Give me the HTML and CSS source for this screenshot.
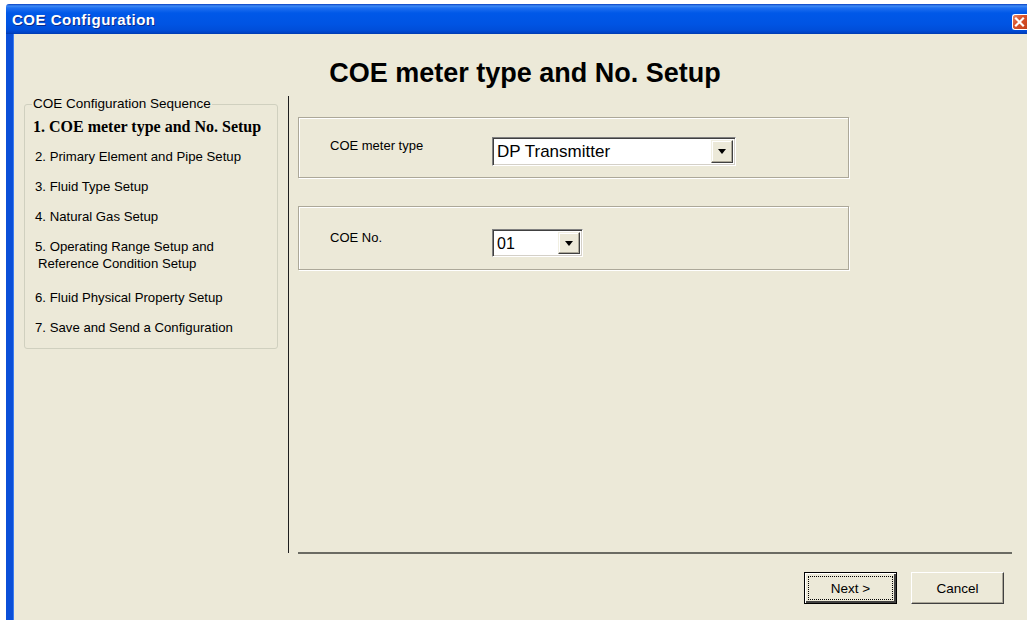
FILE: index.html
```html
<!DOCTYPE html>
<html>
<head>
<meta charset="utf-8">
<title>COE Configuration</title>
<link rel="stylesheet" href="styles.css">
</head>
<body>
<div class="window">
  <div class="titlebar">
    <span class="title">COE Configuration</span>
    <span class="close">
      <svg width="15" height="16" viewBox="0 0 15 16">
        <path d="M4 4.5 L11 11.5 M11 4.5 L4 11.5" stroke="#fff" stroke-width="2.2" stroke-linecap="square"/>
      </svg>
    </span>
  </div>
  <div class="client">
    <h1 class="heading">COE meter type and No. Setup</h1>
    <div class="work">
      <fieldset class="sequence">
        <legend>COE Configuration Sequence</legend>
        <ul class="steps">
          <li class="step current">1. COE meter type and No. Setup</li>
          <li class="step">2. Primary Element and Pipe Setup</li>
          <li class="step">3. Fluid Type Setup</li>
          <li class="step">4. Natural Gas Setup</li>
          <li class="step">5. Operating Range Setup and<br><span class="cont">Reference Condition Setup</span></li>
          <li class="step gap">6. Fluid Physical Property Setup</li>
          <li class="step">7. Save and Send a Configuration</li>
        </ul>
      </fieldset>
      <div class="vline"></div>
      <div class="main">
        <div class="panel panel-type">
          <span class="label">COE meter type</span>
          <div class="combo combo-wide">
            <span class="value">DP Transmitter</span>
            <span class="drop"><span class="arrow"></span></span>
          </div>
        </div>
        <div class="panel panel-no">
          <span class="label">COE No.</span>
          <div class="combo combo-narrow">
            <span class="value">01</span>
            <span class="drop"><span class="arrow"></span></span>
          </div>
        </div>
        <div class="hline"></div>
      </div>
    </div>
    <div class="footer">
      <button class="btn default"><span class="focus">Next &gt;</span></button>
      <button class="btn">Cancel</button>
    </div>
  </div>
</div>
</body>
</html>
```
FILE: styles.css
```css
html, body {
  margin: 0;
  padding: 0;
  background: #ffffff;
  overflow: hidden;
}

body {
  width: 1027px;
  height: 620px;
  font-family: "Liberation Sans", Arial, sans-serif;
}

.window {
  margin: 4px 0 0 6px;
  width: 1021px;
}

/* Luna-style blue caption */
.titlebar {
  height: 30px;
  box-sizing: border-box;
  display: flex;
  align-items: center;
  justify-content: space-between;
  padding-left: 6px;
  background: linear-gradient(to bottom,
    #0a3fc0 0px, #3f8cf5 2px, #1f6ff0 4px, #0058e8 9px,
    #0054e3 20px, #004ed9 26px, #0041c4 29px, #003aa8 30px);
  border-radius: 3px 0 0 0;
}

.title {
  color: #ffffff;
  font-weight: bold;
  font-size: 15px;
  letter-spacing: 0.5px;
  text-shadow: 1px 1px 0 #0a2a8a;
}

.close {
  width: 15px;
  height: 16px;
  margin-top: 5px;
  box-sizing: border-box;
  background: linear-gradient(135deg, #e88a6a 0%, #d9532c 40%, #c4401a 100%);
  border: 1px solid #ffffff;
  border-right: none;
  border-radius: 3px 0 0 3px;
  display: flex;
}

.close svg {
  display: block;
  margin-left: -1px;
  margin-top: -1px;
}

.client {
  height: 586px;
  box-sizing: border-box;
  background: #ece9d8;
  border-left: 7px solid #0a4fd8;
  box-shadow: inset 1px 0 0 #3a7cf0;
  display: flex;
  flex-direction: column;
}

.heading {
  margin: 0;
  padding: 24px 0 0 10px;
  height: 62px;
  box-sizing: border-box;
  text-align: center;
  font-size: 27px;
  line-height: 30px;
  font-weight: bold;
  color: #000000;
}

.work {
  display: flex;
  align-items: flex-start;
  padding-left: 11px;
  height: 458px;
}

/* left: sequence group box */
.sequence {
  width: 254px;
  box-sizing: border-box;
  margin: 0;
  padding: 0 8px 12px 8px;
  border: 1px solid #d0d0bf;
  border-radius: 3px;
}

.sequence legend {
  padding: 0 1px;
  margin-left: -1px;
  font-size: 13.5px;
  line-height: 16px;
  color: #000000;
}

.steps {
  list-style: none;
  margin: 6px 0 0 0;
  padding: 0;
}

.step {
  font-size: 13.2px;
  line-height: 17px;
  color: #000000;
  margin-top: 13px;
  padding-left: 2px;
}

.step:first-child {
  margin-top: 0;
}

.step.current {
  font-family: "Liberation Serif", "Times New Roman", serif;
  font-weight: bold;
  font-size: 16px;
  padding-left: 0;
}

.step .cont {
  padding-left: 3px;
}

.step.gap {
  margin-top: 17px;
}

.vline {
  width: 1px;
  height: 457px;
  background: #1e1e1e;
  margin-left: 10px;
  flex: none;
}

/* right: settings panels */
.main {
  margin-left: 9px;
  width: 714px;
  height: 458px;
  display: flex;
  flex-direction: column;
}

.panel {
  width: 551px;
  box-sizing: border-box;
  border: 1px solid #aca899;
  box-shadow: inset 1px 1px 0 #ffffff, 1px 1px 0 #ffffff;
  display: flex;
  align-items: flex-start;
  padding-left: 31px;
}

.panel-type {
  margin-top: 21px;
  height: 61px;
  padding-top: 19px;
}

.panel-no {
  margin-top: 28px;
  height: 64px;
  padding-top: 22px;
}

.label {
  width: 162px;
  font-size: 13px;
  line-height: 18px;
  color: #000000;
}

.combo {
  height: 29px;
  box-sizing: border-box;
  background: #ffffff;
  border-top: 1px solid #808080;
  border-left: 1px solid #808080;
  border-right: 1px solid #ffffff;
  border-bottom: 1px solid #ffffff;
  box-shadow: inset 1px 1px 0 #404040, inset -1px -1px 0 #d4d0c8;
  display: flex;
  align-items: stretch;
  padding: 2px;
}

.combo-wide {
  width: 244px;
}

.combo-narrow {
  width: 91px;
  height: 28px;
}

.value {
  flex: 1;
  font-size: 17px;
  line-height: 23px;
  padding-left: 2px;
  color: #000000;
}

.combo-narrow .value {
  font-size: 16px;
}

.drop {
  width: 22px;
  box-sizing: border-box;
  background: #ece9d8;
  border-top: 1px solid #f1efe2;
  border-left: 1px solid #f1efe2;
  border-right: 1px solid #404040;
  border-bottom: 1px solid #404040;
  box-shadow: inset -1px -1px 0 #aca899, inset 1px 1px 0 #ffffff;
  display: flex;
  align-items: center;
  justify-content: center;
}

.arrow {
  width: 0;
  height: 0;
  border-left: 4.5px solid transparent;
  border-right: 4.5px solid transparent;
  border-top: 5px solid #000000;
}

.hline {
  margin-top: auto;
  height: 2px;
  background: #6b6b63;
}

/* bottom buttons */
.footer {
  display: flex;
  justify-content: flex-end;
  gap: 14px;
  padding-right: 23px;
  margin-top: 18px;
}

.btn {
  width: 93px;
  height: 32px;
  box-sizing: border-box;
  margin: 0;
  padding: 0;
  font-family: "Liberation Sans", Arial, sans-serif;
  font-size: 13.5px;
  color: #000000;
  background: #ece9d8;
  border-top: 1px solid #ffffff;
  border-left: 1px solid #ffffff;
  border-right: 1px solid #404040;
  border-bottom: 1px solid #404040;
  box-shadow: inset -1px -1px 0 #aca899;
}

.btn.default {
  border: 1px solid #000000;
  box-shadow: inset 1px 1px 0 #ffffff, inset -2px -2px 0 #404040;
  padding: 3px;
}

.btn .focus {
  display: flex;
  align-items: center;
  justify-content: center;
  height: 100%;
  box-sizing: border-box;
  border: 1px dotted #000000;
}
```
